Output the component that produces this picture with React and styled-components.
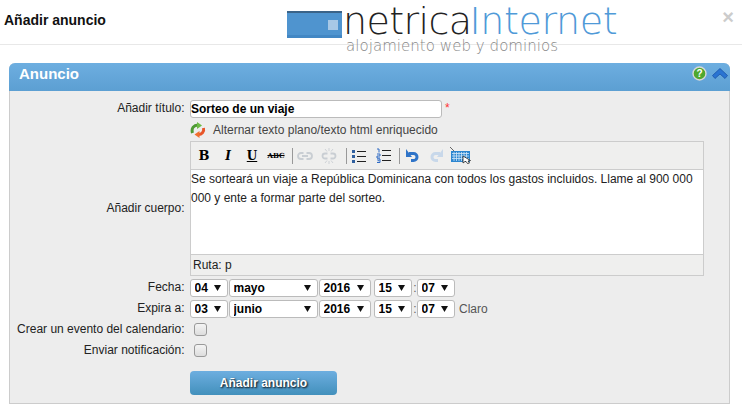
import styled, { createGlobalStyle } from 'styled-components';

const GlobalStyle = createGlobalStyle`
  html, body {
    margin: 0;
    padding: 0;
    background: #fff;
    font-family: "Liberation Sans", Arial, sans-serif;
    font-size: 12px;
    color: #1f1f1f;
  }
`;

const Page = styled.div`
  width: 742px;
  height: 420px;
  overflow: hidden;
  background: #fff;
`;

const Header = styled.div`
  height: 44px;
  border-bottom: 1px solid #e8e8e8;
  display: flex;
  align-items: flex-start;
  justify-content: space-between;
  position: relative;
`;

const Title = styled.h3`
  margin: 12px 0 0 4px;
  font-size: 14px;
  line-height: 16px;
  font-weight: bold;
  color: #111;
`;

const Close = styled.span`
  margin: 7px 8px 0 0;
  font-size: 20px;
  line-height: 20px;
  font-weight: bold;
  color: #ccc;
`;

const Logo = styled.div`
  position: absolute;
  left: 287px;
  top: 0;
  display: grid;
  grid-template-columns: 55px auto;
  column-gap: 1px;
`;

const LogoMark = styled.div`
  width: 55px;
  height: 27px;
  margin-top: 11px;
  box-sizing: border-box;
  background: #4f94cf;
  border-top: 2px solid #3a6388;
  border-bottom: 3px solid #4287c4;
  position: relative;

  &::after {
    content: '';
    position: absolute;
    right: 4px;
    top: 7px;
    width: 10px;
    height: 10px;
    background: #a7c8e6;
  }
`;

const LogoText = styled.div`
  font-family: "DejaVu Sans", sans-serif;
  font-weight: 200;
  font-size: 38px;
  line-height: 36px;
  margin-top: 3px;
  letter-spacing: -0.6px;
  color: #222;
  white-space: nowrap;

  span {
    color: #4f9ad8;
    margin-left: -2px;
    letter-spacing: -0.4px;
  }
`;

const LogoTagline = styled.div`
  grid-column: 2;
  font-family: "DejaVu Sans", sans-serif;
  font-weight: 200;
  font-size: 15px;
  line-height: 14px;
  margin-left: 3px;
  color: #888;
  letter-spacing: 0.05px;
  white-space: nowrap;
`;

const Panel = styled.div`
  margin: 18px 12px 0 9px;
  border: 1px solid #ccc;
  border-top: none;
  border-radius: 6px 6px 0 0;
  background: #ededed;
`;

const PanelHead = styled.div`
  height: 28px;
  box-sizing: border-box;
  margin: 0 -1px;
  border-radius: 6px 6px 0 0;
  background: linear-gradient(#6daee0, #5c9fd2);
  display: flex;
  align-items: flex-start;
  justify-content: space-between;
  padding: 3px 2px 0 10px;
`;

const PanelTitle = styled.h2`
  margin: -1px 0 0;
  font-size: 15px;
  line-height: 17px;
  font-weight: bold;
  color: #fff;
`;

const PanelIcons = styled.div`
  display: flex;
  align-items: center;
  gap: 5px;
`;

const Form = styled.div`
  display: grid;
  grid-template-columns: 174.5px 1fr;
  column-gap: 5.5px;
  padding: 7px 25px 8px 0;
`;

const Label = styled.label`
  text-align: right;
  align-self: center;
  white-space: nowrap;
  padding-bottom: 2px;
  color: #222;
`;

const Field = styled.div`
  display: flex;
  align-items: center;
  min-height: 21px;
`;

const TitleInput = styled.input`
  box-sizing: border-box;
  width: 252px;
  height: 18px;
  padding: 0;
  border: 1px solid #bbb;
  border-radius: 3px;
  font: bold 12px "Liberation Sans", Arial, sans-serif;
  color: #000;
  background: #fff;
`;

const Star = styled.span`
  color: #f33;
  margin: -1px 0 0 3px;
`;

const Toggle = styled.a`
  display: flex;
  align-items: center;
  gap: 7px;
  color: #444;
  height: 22px;
`;

const Editor = styled.div`
  border: 1px solid #ccc;
  width: 514px;
  margin-bottom: 1px;
  box-sizing: border-box;
`;

const Toolbar = styled.div`
  height: 28px;
  box-sizing: border-box;
  background: #efefee;
  border-bottom: 1px solid #ccc;
  display: flex;
  align-items: center;
  padding-left: 1px;
`;

const Tool = styled.span`
  width: 24px;
  display: flex;
  justify-content: center;
  align-items: center;
  color: #000;
`;

const Glyph = styled.span`
  font-family: "DejaVu Serif", serif;
  font-weight: bold;
  font-size: ${(p) => p.$size || 12}px;
  font-style: ${(p) => (p.$italic ? 'italic' : 'normal')};
  text-decoration: ${(p) => p.$line || 'none'};
  line-height: 14px;
`;

const Sep = styled.span`
  width: 1px;
  height: 16px;
  background: #999;
  margin-left: ${(p) => p.$m || 4}px;
`;

const Body = styled.div`
  height: 84px;
  background: #fff;
  line-height: 19px;
  color: #222;
`;

const Path = styled.div`
  height: 20px;
  line-height: 20px;
  background: #efefee;
  border-top: 1px solid #ccc;
  padding-left: 2px;
  color: #222;
`;

const caret = `url("data:image/svg+xml,%3Csvg xmlns='http://www.w3.org/2000/svg' width='7' height='6'%3E%3Cpath d='M0 0h7L3.500 6z' fill='%23111'/%3E%3C/svg%3E")`;

const Select = styled.select`
  appearance: none;
  width: ${(p) => p.$w}px;
  height: 18px;
  margin-right: 1px;
  padding: 0 0 0 3.500px;
  box-sizing: border-box;
  font: bold 12px "Liberation Sans", Arial, sans-serif;
  color: #000;
  background: #fff ${caret} no-repeat right 6px center;
  border: 1px solid #bbb;
  border-radius: 3px;
`;

const Colon = styled.span`
  width: ${(p) => p.$w}px;
  color: #666;
  text-align: center;
`;

const Clear = styled.span`
  color: #555;
  margin-left: 3px;
`;

const Check = styled.span`
  width: 11px;
  height: 11px;
  margin-left: 4px;
  border: 1px solid #999;
  border-radius: 3px;
  background: linear-gradient(#f4f4f4, #ddd);
`;

const Submit = styled.button`
  width: 147px;
  height: 24px;
  margin-top: 10px;
  border: none;
  border-radius: 4px;
  background: linear-gradient(#6daee0, #4290bc);
  color: #fff;
  font: bold 12px "Liberation Sans", Arial, sans-serif;
  text-shadow: 1px 1px 2px #000;
`;

const Toggler = () => (
  <svg width="16" height="16" viewBox="0 0 16 16">
    <path d="M2.500 11C1 6 4 3 8 3" fill="none" stroke="#4f9a35" strokeWidth="3" />
    <path d="M7 0l5 3.500-5 3.500z" fill="#6dbb45" />
    <path d="M13.500 6c1 4-2 6.500-5 6.500" fill="none" stroke="#e8562a" strokeWidth="3" />
    <path d="M9.500 9l-5 3.500 5 3.500z" fill="#f0702f" />
  </svg>
);

const LinkIcon = ({ broken }) => (
  <svg width="16" height="16" viewBox="0 0 16 16" fill="none" stroke="#c9ced3" strokeWidth="1.800">
    {broken ? (
      <>
        <path d="M6.500 5.500H4a2.500 2.500 0 0 0 0 5h2.500M9.500 5.500H12a2.500 2.500 0 0 1 0 5H9.500" />
        <path d="M4 1l2 2.500M12 1l-2 2.500M4 15l2-2.500M12 15l-2-2.500M8 0v3M8 13v3" strokeWidth="0.900" />
      </>
    ) : (
      <path d="M6.500 5H4a3 3 0 0 0 0 6h2.500M9.500 5H12a3 3 0 0 1 0 6H9.500M5 8h6" />
    )}
  </svg>
);

const BulletList = () => (
  <svg width="14" height="14" viewBox="0 0 14 14">
    <path d="M5 2.500h9M5 7.500h9M5 12.500h9" stroke="#222" />
    <path d="M0 1h3v3H0zM0 6h3v3H0zM0 11h3v3H0z" fill="#2f5f9e" />
  </svg>
);

const NumberList = () => (
  <svg width="15" height="15" viewBox="0 0 15 15">
    <path d="M6 2.500h9M6 7.500h9M6 12.500h9" stroke="#222" />
    <path d="M1 1h2v3.500M1 6h3v2H1v2h3M1 11h3v3.500H1M1.500 12.700h2" stroke="#2f6ac4" fill="none" />
  </svg>
);

const Arrow = ({ flip, color }) => (
  <svg width="13" height="15" viewBox="0 0 13 15" style={flip ? { transform: 'scaleX(-1)' } : undefined}>
    <path d="M3 5.500h4.500a3.500 3.500 0 0 1 0 7H5" fill="none" stroke={color} strokeWidth="3" />
    <path d="M0 1v8h6z" fill={color} />
  </svg>
);

const KeyboardIcon = () => (
  <svg width="21" height="17" viewBox="0 0 21 17">
    <path d="M0 0l4 4" stroke="#666" />
    <rect x="1" y="4" width="19" height="11" fill="#2c86d0" />
    <path d="M2 6.500h17M2 9h17M2 11.500h17M4 5v9M6.500 5v9M9 5v9M11.500 5v9M14 5v9M16.500 5v9" stroke="#cfe6f8" strokeWidth="0.800" />
    <path d="M13 9l0 7 2-1.500h1l1.500 2 2-.5-1.500-2 2.500-.5z" fill="#fff" stroke="#222" strokeWidth="0.800" />
  </svg>
);

const HelpIcon = () => (
  <svg width="15" height="15" viewBox="0 0 15 15">
    <circle cx="7.500" cy="7.500" r="6.500" fill="#4fa82e" stroke="#d8d8d8" strokeWidth="1.400" />
    <text x="7.500" y="11" textAnchor="middle" fontSize="10" fontWeight="bold" fill="#fff" fontFamily="Liberation Sans">?</text>
  </svg>
);

const CollapseIcon = () => (
  <svg width="16" height="11" viewBox="0 0 16 11">
    <path d="M8 0.500l7.500 7-2.500 3-5-4.500-5 4.500-2.500-3z" fill="#2a74d2" stroke="#1b55a8" strokeWidth="0.800" />
  </svg>
);

function DateSelects({ day, month, year, hour, minute }) {
  return (
    <>
      <Select $w={38} defaultValue={day}><option>{day}</option></Select>
      <Select $w={89} defaultValue={month}><option>{month}</option></Select>
      <Select $w={52} defaultValue={year}><option>{year}</option></Select>
      <Colon $w={2} />
      <Select $w={38} defaultValue={hour}><option>{hour}</option></Select>
      <Colon $w={4}>:</Colon>
      <Select $w={38} defaultValue={minute}><option>{minute}</option></Select>
    </>
  );
}

export default function App() {
  return (
    <Page>
      <GlobalStyle />
      <Header>
        <Title>Añadir anuncio</Title>
        <Logo>
          <LogoMark />
          <LogoText>netrica<span>Internet</span></LogoText>
          <LogoTagline>alojamiento web y dominios</LogoTagline>
        </Logo>
        <Close>×</Close>
      </Header>
      <Panel>
        <PanelHead>
          <PanelTitle>Anuncio</PanelTitle>
          <PanelIcons>
            <HelpIcon />
            <CollapseIcon />
          </PanelIcons>
        </PanelHead>
        <Form>
          <Label>Añadir título:</Label>
          <Field>
            <TitleInput defaultValue="Sorteo de un viaje" />
            <Star>*</Star>
          </Field>
          <span />
          <Toggle><Toggler />Alternar texto plano/texto html enriquecido</Toggle>
          <Label>Añadir cuerpo:</Label>
          <Editor>
            <Toolbar>
              <Tool><Glyph $size={13}>B</Glyph></Tool>
              <Tool><Glyph $italic>I</Glyph></Tool>
              <Tool><Glyph $line="underline">U</Glyph></Tool>
              <Tool><Glyph $size={7} $line="line-through">ABC</Glyph></Tool>
              <Sep />
              <Tool><LinkIcon /></Tool>
              <Tool><LinkIcon broken /></Tool>
              <Sep $m={5} />
              <Tool><BulletList /></Tool>
              <Tool><NumberList /></Tool>
              <Sep />
              <Tool><Arrow color="#2f74c8" /></Tool>
              <Tool><Arrow flip color="#c8d8ea" /></Tool>
              <Tool><KeyboardIcon /></Tool>
            </Toolbar>
            <Body>Se sorteará un viaje a República Dominicana con todos los gastos incluidos. Llame al 900 000 000 y ente a formar parte del sorteo.</Body>
            <Path>Ruta: p</Path>
          </Editor>
          <Label>Fecha:</Label>
          <Field><DateSelects day="04" month="mayo" year="2016" hour="15" minute="07" /></Field>
          <Label>Expira a:</Label>
          <Field><DateSelects day="03" month="junio" year="2016" hour="15" minute="07" /><Clear>Claro</Clear></Field>
          <Label>Crear un evento del calendario:</Label>
          <Field><Check /></Field>
          <Label>Enviar notificación:</Label>
          <Field><Check /></Field>
          <span />
          <Field><Submit>Añadir anuncio</Submit></Field>
        </Form>
      </Panel>
    </Page>
  );
}
